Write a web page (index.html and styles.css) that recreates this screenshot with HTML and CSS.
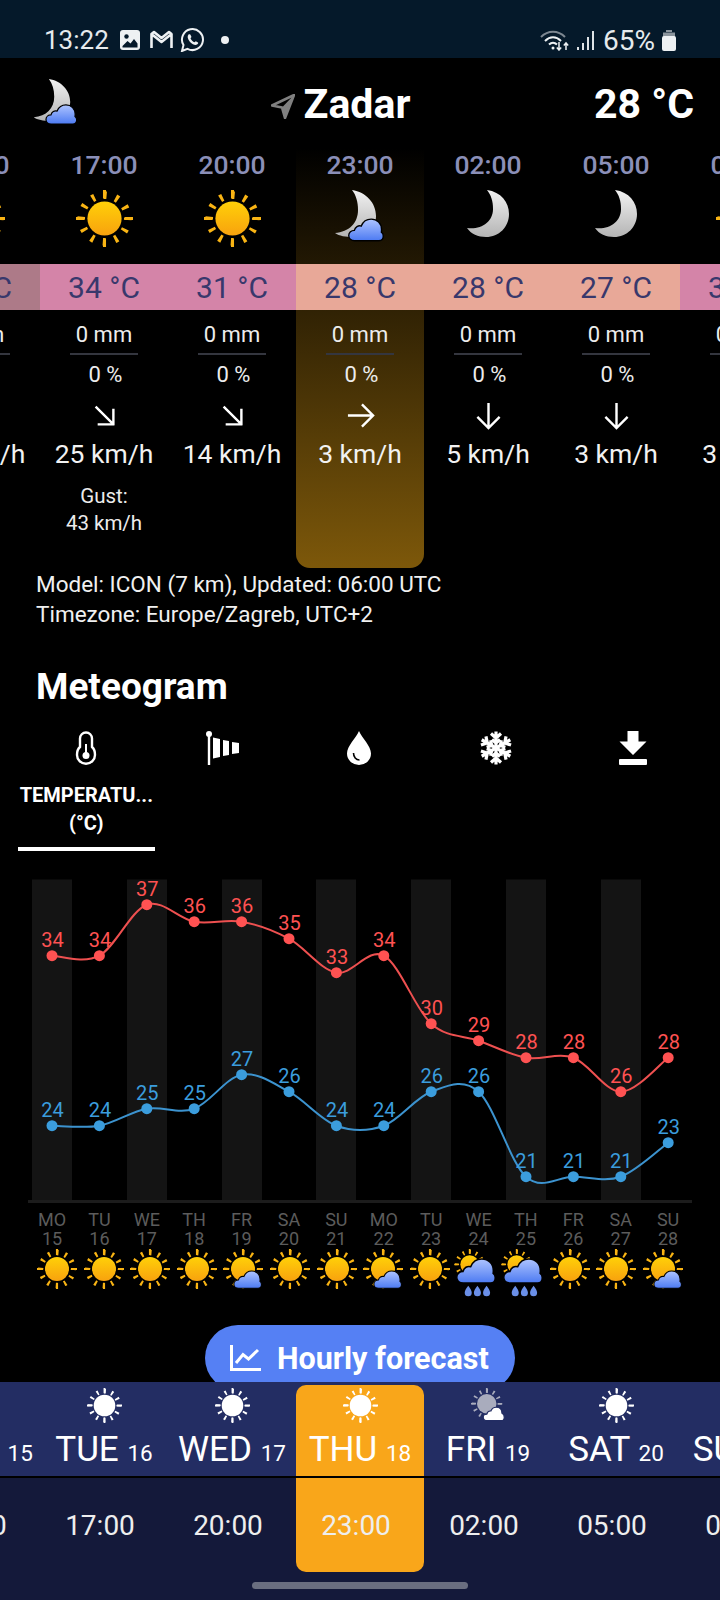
FILE: index.html
```html
<!DOCTYPE html>
<html lang="en">
<head>
  <meta charset="UTF-8">
  <meta name="viewport" content="width=device-width, initial-scale=1.0">
  <title>Zadar</title>
  <link rel="stylesheet" href="styles.css">
</head>
<body>
  <svg class="defs" width="0" height="0" aria-hidden="true">
    <defs>
      <linearGradient id="g-sun" x1="0" y1="0" x2="0" y2="1"><stop offset="0" stop-color="#ffd008"/><stop offset="1" stop-color="#f8a20e"/></linearGradient>
      <linearGradient id="g-moon" x1="0" y1="0" x2="0" y2="1"><stop offset="0" stop-color="#f2f2f2"/><stop offset="1" stop-color="#b4b4b4"/></linearGradient>
      <linearGradient id="g-cloud" x1="0" y1="0" x2="0" y2="1"><stop offset="0" stop-color="#aec4ff"/><stop offset="1" stop-color="#4c7af2"/></linearGradient>
    </defs>

    <symbol id="sun" viewBox="0 0 60 60">
      <circle cx="30" cy="30" r="24.500" fill="none" stroke="#f9b414" stroke-width="8" stroke-dasharray="3.200 9.628" stroke-dashoffset="1.600"/>
      <path d="M30 0v9M30 51v9M0 30h9M51 30h9" stroke="#f9b414" stroke-width="3.200"/>
      <circle cx="30" cy="30" r="18" fill="url(#g-sun)"/>
    </symbol>
    <symbol id="sun-white" viewBox="0 0 60 60">
      <circle cx="30" cy="30" r="24.500" fill="none" stroke="currentColor" stroke-width="8" stroke-dasharray="3.200 9.628" stroke-dashoffset="1.600"/>
      <path d="M30 0v9M30 51v9M0 30h9M51 30h9" stroke="currentColor" stroke-width="3.200"/>
      <circle cx="30" cy="30" r="18.500" fill="currentColor"/>
    </symbol>
    <symbol id="moon" viewBox="0 0 42 47">
      <path d="M20 0C34 2 42 12 42 24C42 37 32 47 19 47C11 47 4 44 0 38C14 40 26 32 26 19C26 11 24 5 20 0Z" fill="url(#g-moon)"/>
    </symbol>
    <symbol id="cloud" viewBox="-2 -2 44 30">
      <path d="M7 26C3 26 0 23.500 0 20C0 16.500 3 14 6.500 14C7.500 10 11 8 14.500 9C16.500 4 21 1 26 1C33 1 38 6 38 13C38 14 38 15 37.800 16C39.300 17 40 18.800 40 20.500C40 24 38 26 35 26Z" fill="url(#g-cloud)" stroke="#000" stroke-width="1.600"/>
    </symbol>
    <symbol id="moon-cloud" viewBox="0 0 50 54">
      <path d="M17 0C31 2 41 13 41 26C41 39 31 47 18 47C11 47 4 46 0 43C14 42 23 33 23 20C23 12 21 5 17 0Z" fill="url(#g-moon)"/>
      <use href="#cloud" x="12" y="26" width="38" height="27"/>
    </symbol>
    <symbol id="sun-cloud" viewBox="0 0 60 60">
      <use href="#sun" width="60" height="60"/>
      <use href="#cloud" x="14" y="30" width="46" height="31"/>
    </symbol>
    <symbol id="sun-rain" viewBox="0 0 62 68">
      <use href="#sun" x="0" y="0" width="44" height="44"/>
      <use href="#cloud" x="1" y="10" width="60" height="41"/>
      <path d="M20 52c3 4 5 7 5 10a5 5 0 0 1-10 0c0-3 2-6 5-10ZM33 52c3 4 5 7 5 10a5 5 0 0 1-10 0c0-3 2-6 5-10ZM46 52c3 4 5 7 5 10a5 5 0 0 1-10 0c0-3 2-6 5-10Z" fill="#6a8fe8"/>
    </symbol>
    <symbol id="sun-cloud-white" viewBox="0 0 60 60">
      <use href="#sun-white" width="54" height="54" class="dim"/>
      <path d="M28 56C23 56 21 53 21 50C21 47 23 45 27 45C28 41 31 39 34 39.500C36 35 39 33 43 33C49 33 53 37 53 43C56 44 57 47 57 50C57 53 55 56 52 56Z" fill="#fff" stroke="#232d63" stroke-width="2"/>
    </symbol>
    <symbol id="arrow" viewBox="0 0 30 30">
      <path d="M15 2V27M3.500 16.500L15 28L26.500 16.500" fill="none" stroke="#fff" stroke-width="2.500"/>
    </symbol>
  </svg>

  <div class="status">
    <div class="status-left">
      <span class="clock">13:22</span>
      <svg class="st-img" viewBox="0 0 20 20"><rect width="20" height="20" rx="3" fill="#eef1f3"/><circle cx="6.500" cy="6.500" r="2.200" fill="#05192a"/><path d="M2.500 16l5-5 3 2.500 3.500-4.500 3.500 4.500V17.500H2.500Z" fill="#05192a"/></svg>
      <svg class="st-m" viewBox="0 0 24 20"><path d="M2 18V4L12 12L22 4V18M2 4L4.500 2L12 8L19.500 2L22 4" fill="none" stroke="#eef1f3" stroke-width="2.600" stroke-linejoin="round"/></svg>
      <svg class="st-wa" viewBox="0 0 25 24"><path d="M2 23L3.500 17A10.500 10.500 0 1 1 7.500 20.800Z" fill="none" stroke="#eef1f3" stroke-width="2"/><path d="M8.500 6.500C7 8 7.500 11 10 14C12.500 16.500 15.500 17.500 17 16.500C18 15.800 18.500 15 18 14.500L15.800 13.300L14.500 14.300C13 13.800 11 12 10.500 10.300L11.500 9L10.300 6.500C9.500 6 9 6 8.500 6.500Z" fill="#eef1f3"/></svg>
      <span class="st-dot"></span>
    </div>
    <div class="status-right">
      <svg class="st-wifi" viewBox="0 0 30 22"><path d="M1 8C8 1 18 1 25 8" fill="none" stroke="#7d8791" stroke-width="2"/><path d="M5 12C10 7 16 7 21 12M9 15.500C11.500 13 14.500 13 17 15.500" fill="none" stroke="#eef1f3" stroke-width="2"/><circle cx="13" cy="19" r="1.500" fill="#eef1f3"/><path d="M19 13v8M16.800 18.500L19 21L21.200 18.500M26 21v-7M23.800 16.500L26 14L28.200 16.500" fill="none" stroke="#eef1f3" stroke-width="1.500"/></svg>
      <svg class="st-signal" viewBox="0 0 18 19"><path d="M1 19v-3h2v3ZM6 19v-7h2v7ZM11 19V6h2v13ZM16 19V0h2v19Z" fill="#dfe3e6"/></svg>
      <span class="st-pct">65%</span>
      <svg class="st-batt" viewBox="0 0 14 21"><path d="M4 0h6v2H4Z" fill="#8b949c"/><path d="M1 2.500h12V7H1Z" fill="#8b949c"/><rect y="6" width="14" height="15" rx="2" fill="#eef1f3"/></svg>
    </div>
  </div>

  <div class="head">
    <svg class="head-icon"><use href="#moon-cloud"/></svg>
    <div class="place">
      <svg class="nav-arrow" viewBox="0 0 24 25"><path d="M23 1L1 11.500L11 13.500L14 24Z" fill="none" stroke="#808080" stroke-width="2.600" stroke-linejoin="round"/><path d="M23 1L11 13.500L14 24Z" fill="#808080"/></svg>
      <span>Zadar</span>
    </div>
    <div class="now-temp">28 °C</div>
  </div>

  <div class="hours" id="hours"></div>

  <div class="info">
    <div>Model: ICON (7 km), Updated: 06:00 UTC</div>
    <div>Timezone: Europe/Zagreb, UTC+2</div>
  </div>

  <h2 class="title">Meteogram</h2>

  <div class="tabs">
    <div class="tab active">
      <svg class="tab-icon" viewBox="0 0 30 34"><path d="M9 7.500a6 6 0 0 1 12 0V16C23.500 18 24 21 24 24a9 8.700 0 0 1-18 0C6 21 6.500 18 9 16Z" fill="none" stroke="#fff" stroke-width="2.400"/><circle cx="15" cy="24.500" r="3.500" fill="#fff"/><path d="M15 13v10" stroke="#fff" stroke-width="2"/></svg>
      <div class="tab-text">TEMPERATU...<br>(°C)</div>
    </div>
    <div class="tab">
      <svg class="tab-icon" viewBox="0 0 34 34"><circle cx="3" cy="3" r="3" fill="#fff"/><path d="M3 4V34" stroke="#fff" stroke-width="2.400"/><path d="M7 6.500L14 8V26L7 27.500ZM17 9L23 10V24L17 25ZM26 11L33 12V22L26 23Z" fill="#fff"/></svg>
    </div>
    <div class="tab">
      <svg class="tab-icon" viewBox="0 0 30 34"><path d="M15 0C18 7 27 15 27 22.500A12 11.500 0 0 1 3 22.500C3 15 12 7 15 0Z" fill="#fff"/><path d="M9.500 22C9.500 26 12 29 15.500 29" fill="none" stroke="#000" stroke-width="1.600"/></svg>
    </div>
    <div class="tab">
      <svg class="tab-icon" viewBox="-17 -17 34 34" id="flake"></svg>
    </div>
    <div class="tab">
      <svg class="tab-icon" viewBox="0 0 30 34"><path d="M9.500 0H20.500V10.500H28.500L15 24L1.500 10.500H9.500Z" fill="#fff"/><rect x="1" y="28" width="28" height="6" rx="1" fill="#fff"/></svg>
    </div>
  </div>

  <svg class="chart" id="chart" viewBox="0 851 720 352"></svg>

  <div class="day-labels" id="day-labels"></div>
  <div class="day-icons" id="day-icons"></div>

  <div class="forecast-btn">
    <svg viewBox="0 0 31 26"><path d="M1.500 0V24.500H31M6 18L13 9.500L18.500 14L28 5" fill="none" stroke="#fff" stroke-width="3"/></svg>
    <span>Hourly forecast</span>
  </div>

  <div class="nav">
    <div class="nav-days" id="nav-days"></div>
    <div class="nav-times" id="nav-times"></div>
    <div class="home-bar"></div>
  </div>

  <script src="app.js"></script>
</body>
</html>
```

FILE: styles.css
```css
* { box-sizing: border-box; }
html, body { margin: 0; padding: 0; }
body { width: 720px; height: 1600px; overflow: hidden; background: #000; color: #fff; font-family: Roboto, "Liberation Sans", sans-serif; }
.defs { position: absolute; }
.dim { color: #a9acbd; }

/* status bar */
.status { height: 58px; padding: 0 44px 4px 44px; background: #05192a; display: flex; align-items: flex-end; justify-content: space-between; color: #e6eaed; }
.status-left, .status-right { display: flex; align-items: center; height: 26px; margin-bottom: 1px; }
.clock { font-size: 26px; width: 76px; }
.st-img { width: 20px; height: 20px; margin-right: 9px; }
.st-m { width: 25px; height: 20px; margin-right: 6px; }
.st-wa { width: 25px; height: 24px; }
.st-dot { width: 8px; height: 8px; border-radius: 50%; background: #eef1f3; margin-left: 16px; }
.st-wifi { width: 30px; height: 22px; }
.st-signal { width: 18px; height: 19px; margin-left: 6px; }
.st-pct { font-size: 28px; margin-left: 9px; width: 59px; }
.st-batt { width: 14px; height: 21px; }

/* top row */
.head { height: 90px; padding: 2px 26px 0 33px; display: flex; align-items: center; justify-content: space-between; font-weight: 700; font-size: 41px; }
.head-icon { width: 46px; height: 48px; margin-bottom: 2px; }
.place { display: flex; align-items: center; gap: 9px; margin-left: 8px; }
.nav-arrow { width: 24px; height: 25px; margin-top: 4px; }

/* hourly columns */
.hours { display: flex; width: 896px; margin-left: -88px; height: 420px; text-align: center; }
.hour { width: 128px; flex: none; display: flex; flex-direction: column; align-items: center; }
.hour.now { background: linear-gradient(to bottom, rgba(125, 88, 10, 0) 0, #7d580a 100%); border-radius: 0 0 14px 14px; }
.h-time { height: 32px; line-height: 34px; font-size: 26.500px; font-weight: 500; color: #8b8fb8; }
.h-sky { height: 84px; padding-top: 10px; }
.h-sky svg { display: block; }
.sky-sun { width: 57px; height: 57px; }
.sky-moon { width: 42px; height: 47px; }
.sky-moon-cloud { width: 50px; height: 54px; }
.h-temp { width: 100%; height: 46px; line-height: 48px; font-size: 30px; color: #38386c; }
.t-dim { background: #ad7a88; }
.t-pink { background: #d484a8; }
.t-salmon { background: #e8a898; }
.h-rain { width: 68px; height: 45px; padding-top: 12px; line-height: 26px; font-size: 22px; white-space: nowrap; display: flex; justify-content: center; border-bottom: 2px solid #34363f; color: #ececec; }
.h-pop { height: 40px; padding-left: 3px; line-height: 40px; font-size: 22px; color: #ececec; }
.h-dir { height: 40px; display: flex; align-items: center; }
.h-dir svg { width: 29px; height: 29px; }
.h-speed { height: 38px; line-height: 38px; font-size: 26.500px; white-space: nowrap; color: #f2f2f2; }
.h-gust { margin-top: 10px; font-size: 20.500px; line-height: 27px; color: #ececec; }

.info { margin-top: 1px; padding-left: 36px; font-size: 22.500px; line-height: 30px; color: #f0f0f0; }
.title { margin: 36px 0 0 36px; font-size: 37px; line-height: 44px; font-weight: 700; }

/* meteogram tabs */
.tabs { display: flex; padding: 22px 0 0 18px; height: 142px; }
.tab { width: 136.600px; display: flex; flex-direction: column; align-items: center; }
.tab-icon { width: 34px; height: 34px; }
.tab-text { margin-top: 16px; font-size: 20px; font-weight: 700; line-height: 28px; text-align: center; white-space: nowrap; }
.tab.active { height: 120px; border-bottom: 4px solid #fff; }

.chart { display: block; width: 720px; height: 352px; }
.chart text { font-family: Roboto, "Liberation Sans", sans-serif; font-size: 20px; text-anchor: middle; }

.day-labels { display: flex; padding: 7px 0 0 28.300px; }
.day-label { width: 47.400px; text-align: center; font-size: 18px; line-height: 19px; color: #5c5c5c; }
.day-icons { display: flex; margin-top: 1px; padding-left: 33.700px; height: 76px; }
.day-icon { width: 46.600px; display: flex; justify-content: center; align-items: flex-start; }
.day-icon svg { width: 40px; height: 40px; flex: none; }
.day-icon svg.rain { width: 44px; height: 48px; }

.forecast-btn { position: relative; width: 310px; height: 66px; margin: 0 auto -9px; border-radius: 33px; background: #5580f4; display: flex; align-items: center; padding-left: 25px; gap: 16px; font-size: 30.500px; font-weight: 700; white-space: nowrap; }
.forecast-btn svg { width: 31px; height: 26px; }

/* bottom selector */
.nav { position: relative; height: 218px; background: #000; }
.nav-days, .nav-times { display: flex; width: 896px; margin-left: -88px; }
.nav-days { height: 94px; background: #232d63; margin-bottom: 2px; }
.nav-times { height: 122px; background: #14193a; }
.nav-day { width: 128px; flex: none; padding-top: 6px; display: flex; flex-direction: column; align-items: center; white-space: nowrap; }
.nav-day svg { width: 35px; height: 35px; color: #fff; flex: none; }
.nav-day-text { margin-top: 7px; font-size: 35px; line-height: 40px; }
.nav-day-text small { font-size: 22.500px; }
.nav-day.on { margin-top: 3px; padding-top: 3px; background: #f9a61a; border-radius: 10px 10px 0 0; }
.nav-time { width: 128px; flex: none; height: 94px; padding-right: 8px; line-height: 96px; text-align: center; font-size: 28px; color: #eeeeee; }
.nav-time.on { background: #f9a61a; border-radius: 0 0 10px 10px; }
.home-bar { position: absolute; left: 252px; top: 200px; width: 216px; height: 7px; border-radius: 4px; background: #6a6e80; }
```

FILE: app.js
```js
const $ = (selector) => document.querySelector(selector);
const icon = (name, cls = '') => `<svg class="${cls}"><use href="#${name}"/></svg>`;

// hourly columns, first and last are cut off by the screen
const hours = [
  { time: '14:00', sky: 'sun', temp: '33 °C', band: 't-dim', dir: -45, speed: '20 km/h' },
  { time: '17:00', sky: 'sun', temp: '34 °C', band: 't-pink', dir: -45, speed: '25 km/h', gust: '43 km/h' },
  { time: '20:00', sky: 'sun', temp: '31 °C', band: 't-pink', dir: -45, speed: '14 km/h' },
  { time: '23:00', sky: 'moon-cloud', temp: '28 °C', band: 't-salmon', dir: -90, speed: '3 km/h', now: true },
  { time: '02:00', sky: 'moon', temp: '28 °C', band: 't-salmon', dir: 0, speed: '5 km/h' },
  { time: '05:00', sky: 'moon', temp: '27 °C', band: 't-salmon', dir: 0, speed: '3 km/h' },
  { time: '08:00', sky: 'sun', temp: '31 °C', band: 't-pink', dir: 0, speed: '3 km/h' },
];

const renderHour = (h) => `
  <div class="hour ${h.now ? 'now' : ''}">
    <div class="h-time">${h.time}</div>
    <div class="h-sky">${icon(h.sky, 'sky-' + h.sky)}</div>
    <div class="h-temp ${h.band}">${h.temp}</div>
    <div class="h-rain">0 mm</div>
    <div class="h-pop">0 %</div>
    <div class="h-dir"><svg style="transform: rotate(${h.dir}deg)"><use href="#arrow"/></svg></div>
    <div class="h-speed">${h.speed}</div>
    ${h.gust ? `<div class="h-gust">Gust:<br>${h.gust}</div>` : ''}
  </div>
`;
$('#hours').innerHTML = hours.map(renderHour).join('');

// snowflake: six arms with two pairs of branches
const arm = '<path d="M0 0V-16.500M-5 -14.500L0 -10L5 -14.500M-4 -8.500L0 -5L4 -8.500" fill="none" stroke="#fff" stroke-width="3.200"/>';
$('#flake').innerHTML = [0, 60, 120, 180, 240, 300].map(a => `<g transform="rotate(${a})">${arm}</g>`).join('');

// meteogram
const high = [34, 34, 37, 36, 36, 35, 33, 34, 30, 29, 28, 28, 26, 28];
const low = [24, 24, 25, 25, 27, 26, 24, 24, 26, 26, 21, 21, 21, 23];
const xAt = (i) => 52 + i * 47.4;
const yAt = (t) => 955.7 + (34 - t) * 17;

const spline = (pts) => {
  let d = `M${pts[0][0]} ${pts[0][1]}`;
  for (let i = 0; i < pts.length - 1; i++) {
    const p0 = pts[Math.max(i - 1, 0)], p1 = pts[i], p2 = pts[i + 1], p3 = pts[Math.min(i + 2, pts.length - 1)];
    const c1 = [p1[0] + (p2[0] - p0[0]) / 6, p1[1] + (p2[1] - p0[1]) / 6];
    const c2 = [p2[0] - (p3[0] - p1[0]) / 6, p2[1] - (p3[1] - p1[1]) / 6];
    d += `C${c1[0]} ${c1[1]} ${c2[0]} ${c2[1]} ${p2[0]} ${p2[1]}`;
  }
  return d;
};

const renderSeries = (values, line, color) => {
  const pts = values.map((t, i) => [xAt(i), yAt(t)]);
  const dots = pts.map(p => `<circle cx="${p[0]}" cy="${p[1]}" r="5.500" fill="${color}"/>`).join('');
  const labels = pts.map((p, i) => `<text x="${p[0] + 0.500}" y="${p[1] - 9}" fill="${color}">${values[i]}</text>`).join('');
  return `<path d="${spline(pts)}" fill="none" stroke="${line}" stroke-width="2"/>${dots}${labels}`;
};

const stripes = [32, 127, 222, 316, 411, 506, 601]
  .map(x => `<rect x="${x}" y="879.500" width="40" height="320.500" fill="#141414"/>`).join('');

$('#chart').innerHTML = stripes
  + '<rect x="28" y="1200" width="664" height="3" fill="#1c1c1c"/>'
  + renderSeries(high, '#ee5050', '#ff5252')
  + renderSeries(low, '#3c93cf', '#3b9ddd');

// days under the chart
const days = [['MO', 15], ['TU', 16], ['WE', 17], ['TH', 18], ['FR', 19], ['SA', 20], ['SU', 21],
  ['MO', 22], ['TU', 23], ['WE', 24], ['TH', 25], ['FR', 26], ['SA', 27], ['SU', 28]];
const skies = ['sun', 'sun', 'sun', 'sun', 'sun-cloud', 'sun', 'sun', 'sun-cloud', 'sun', 'sun-rain', 'sun-rain', 'sun', 'sun', 'sun-cloud'];

$('#day-labels').innerHTML = days.map(d => `<div class="day-label">${d[0]}<br>${d[1]}</div>`).join('');
$('#day-icons').innerHTML = skies.map(s => `<div class="day-icon">${icon(s, s === 'sun-rain' ? 'rain' : '')}</div>`).join('');

// bottom selector
const navDays = [
  { name: 'MON', num: 15, sky: 'sun-white' }, { name: 'TUE', num: 16, sky: 'sun-white' },
  { name: 'WED', num: 17, sky: 'sun-white' }, { name: 'THU', num: 18, sky: 'sun-white', on: true },
  { name: 'FRI', num: 19, sky: 'sun-cloud-white' }, { name: 'SAT', num: 20, sky: 'sun-white' },
  { name: 'SUN', num: 21, sky: 'sun-white' },
];

$('#nav-days').innerHTML = navDays.map(d => `
  <div class="nav-day ${d.on ? 'on' : ''}">
    ${icon(d.sky)}
    <div class="nav-day-text">${d.name} <small>${d.num}</small></div>
  </div>
`).join('');
$('#nav-times').innerHTML = hours.map(h => `<div class="nav-time ${h.now ? 'on' : ''}">${h.time}</div>`).join('');
```
